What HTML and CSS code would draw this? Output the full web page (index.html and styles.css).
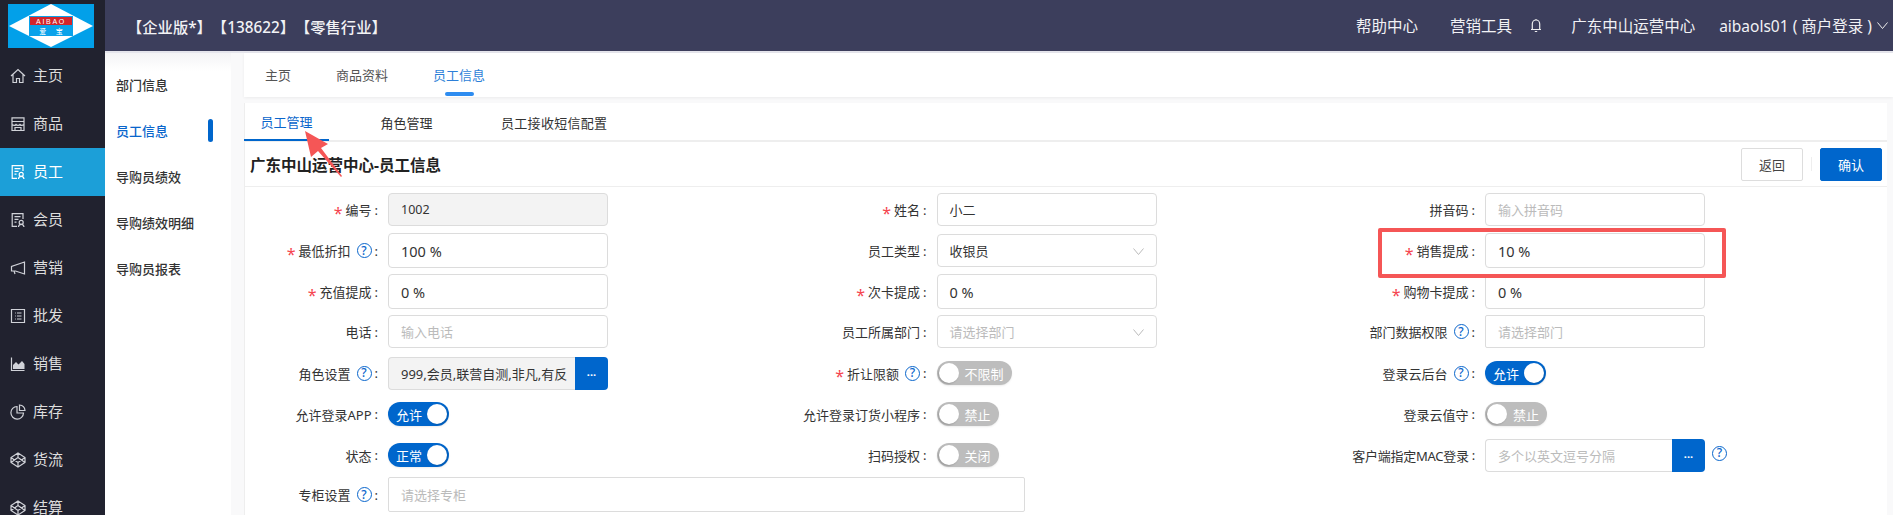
FILE: index.html
```html
<!DOCTYPE html>
<html lang="zh">
<head>
<meta charset="utf-8">
<title>员工信息</title>
<link rel="stylesheet" href="styles.css">
</head>
<body>
<svg class="defs" width="0" height="0">
  <symbol id="i-doc" viewBox="0 0 16 16"><path d="M13 7V1.600H2.200v12.800H7M4.500 4.600h6M4.500 7.400h4M4.500 10.200h2"/><circle cx="11.200" cy="10.400" r="2"/><path d="M8.400 15c.3-1.700 1.300-2.600 2.800-2.600s2.500.9 2.800 2.600"/></symbol>
  <symbol id="i-cube" viewBox="0 0 16 16"><path d="M8 1l7 4.500v5L8 15l-7-4.500v-5zM8 1v4.500M8 15v-4.500M1 5.500l7 5 7-5M1 10.500l7-5 7 5"/></symbol>
</svg>
<div class="app">
  <aside class="sidebar">
    <div class="logo">
      <svg width="86" height="44" viewBox="0 0 86 44">
        <rect width="86" height="44" fill="#02a0e9"/>
        <polygon points="1,22 43,0 85,22 43,43" fill="#fff"/>
        <rect x="21" y="12" width="44" height="20" fill="#0aa2ea"/>
        <rect x="22" y="13" width="42" height="8" fill="#d4252b"/>
        <text class="logo-en" x="43" y="19.500">AIBAO</text>
        <text class="logo-cn" x="43" y="30">爱 宝</text>
      </svg>
    </div>
    <nav class="menu">
      <a class="menu-item"><svg class="mi" viewBox="0 0 16 16"><path d="M1 8l7-6.500L15 8M3 6.500v8h3.500v-4h3v4H13v-8"/></svg>主页</a>
      <a class="menu-item"><svg class="mi" viewBox="0 0 16 16"><path d="M2 1.800h12V14.500H2zM2 5.500h12M2 8.500c1.500 1.200 3 1.200 4 0 1 1.200 3 1.200 4 0 1 1.200 2.500 1.200 4 0M5 14.500v-3h6v3"/></svg>商品</a>
      <a class="menu-item active"><svg class="mi"><use href="#i-doc"/></svg>员工</a>
      <a class="menu-item"><svg class="mi"><use href="#i-doc"/></svg>会员</a>
      <a class="menu-item"><svg class="mi" viewBox="0 0 16 16"><path d="M14.500 2v12L5.500 11H1.500V6.500zM4 11l1 3"/></svg>营销</a>
      <a class="menu-item"><svg class="mi" viewBox="0 0 16 16"><path d="M1.500 1.500h13v13h-13zM7 5h4.500M7 8h4.500M7 11h4.500M5 5h.8M5 8h.8M5 11h.8"/></svg>批发</a>
      <a class="menu-item"><svg class="mi" viewBox="0 0 16 16"><path d="M1.500 1.500v13h13"/><path class="fill" d="M3 13V9l3-3 2.500 2.500L12 5l2.500 3v5z"/></svg>销售</a>
      <a class="menu-item"><svg class="mi" viewBox="0 0 16 16"><path d="M7 2.500a6.300 6.300 0 1 0 6.500 6.500H7zM9.500 1a6 6 0 0 1 5.500 5.500H9.500z"/></svg>库存</a>
      <a class="menu-item"><svg class="mi"><use href="#i-cube"/></svg>货流</a>
      <a class="menu-item"><svg class="mi"><use href="#i-cube"/></svg>结算</a>
    </nav>
  </aside>
  <div class="right">
    <header class="topbar">
      <div class="edition">【企业版*】【138622】【零售行业】</div>
      <div class="top-links">
        <span class="top-help">帮助中心</span>
        <span class="top-tool">营销工具</span>
        <svg class="bell" viewBox="0 0 12 15"><path d="M1 11.500h10M2.300 11.500V6a3.700 4 0 0 1 7.400 0v5.500M4.800 13.500h2.400M6 1v1"/></svg>
        <span class="top-org">广东中山运营中心</span>
        <span class="top-user">aibaols01 ( 商户登录 )</span>
        <svg class="top-chev" viewBox="0 0 11 7"><path d="M.5.500L5.500 6.500 10.500.500"/></svg>
      </div>
    </header>
    <div class="body">
      <nav class="subnav">
        <a class="sub-item">部门信息</a>
        <a class="sub-item on">员工信息</a>
        <a class="sub-item">导购员绩效</a>
        <a class="sub-item">导购绩效明细</a>
        <a class="sub-item">导购员报表</a>
      </nav>
      <main class="main">
        <div class="page-tabs">
          <a class="page-tab">主页</a>
          <a class="page-tab">商品资料</a>
          <a class="page-tab on">员工信息</a>
        </div>
        <section class="panel">
          <div class="panel-tabs">
            <a class="panel-tab on">员工管理</a>
            <a class="panel-tab">角色管理</a>
            <a class="panel-tab">员工接收短信配置</a>
          </div>
          <div class="panel-head">
            <h1 class="panel-title">广东中山运营中心-员工信息</h1>
            <button class="btn">返回</button>
            <span class="btn-sep"></span>
            <button class="btn primary">确认</button>
          </div>
          <div class="form">
            <div class="cell"><label class="lab"><i class="req">*</i>编号<b>:</b></label><div class="field off small">1002</div></div>
            <div class="cell"><label class="lab"><i class="req">*</i>姓名<b>:</b></label><div class="field">小二</div></div>
            <div class="cell"><label class="lab">拼音码<b>:</b></label><div class="field ph">输入拼音码</div></div>

            <div class="cell"><label class="lab"><i class="req">*</i>最低折扣<u class="help">?</u><b>:</b></label><div class="field tall num">100 %</div></div>
            <div class="cell"><label class="lab">员工类型<b>:</b></label><div class="field sel">收银员<svg class="chev" viewBox="0 0 11 7"><path d="M.5.500L5.500 6.500 10.500.500"/></svg></div></div>
            <div class="cell"><label class="lab"><i class="req">*</i>销售提成<b>:</b></label><div class="field tall num">10 %</div></div>

            <div class="cell"><label class="lab"><i class="req">*</i>充值提成<b>:</b></label><div class="field tall num">0 %</div></div>
            <div class="cell"><label class="lab"><i class="req">*</i>次卡提成<b>:</b></label><div class="field tall num">0 %</div></div>
            <div class="cell"><label class="lab"><i class="req">*</i>购物卡提成<b>:</b></label><div class="field tall num">0 %</div></div>

            <div class="cell"><label class="lab">电话<b>:</b></label><div class="field ph">输入电话</div></div>
            <div class="cell"><label class="lab">员工所属部门<b>:</b></label><div class="field ph sel">请选择部门<svg class="chev" viewBox="0 0 11 7"><path d="M.5.500L5.500 6.500 10.500.500"/></svg></div></div>
            <div class="cell"><label class="lab">部门数据权限<u class="help">?</u><b>:</b></label><div class="field ph square">请选择部门</div></div>

            <div class="cell"><label class="lab">角色设置<u class="help">?</u><b>:</b></label><div class="combo"><div class="field off clip">999,会员,联营自测,非凡,有反</div><span class="more">...</span></div></div>
            <div class="cell"><label class="lab"><i class="req">*</i>折让限额<u class="help">?</u><b>:</b></label><span class="sw wide"><em class="knob"></em>不限制</span></div>
            <div class="cell"><label class="lab">登录云后台<u class="help">?</u><b>:</b></label><span class="sw yes">允许<em class="knob"></em></span></div>

            <div class="cell"><label class="lab">允许登录APP<b>:</b></label><span class="sw yes">允许<em class="knob"></em></span></div>
            <div class="cell"><label class="lab">允许登录订货小程序<b>:</b></label><span class="sw"><em class="knob"></em>禁止</span></div>
            <div class="cell"><label class="lab">登录云值守<b>:</b></label><span class="sw"><em class="knob"></em>禁止</span></div>

            <div class="cell"><label class="lab">状态<b>:</b></label><span class="sw yes">正常<em class="knob"></em></span></div>
            <div class="cell"><label class="lab">扫码授权<b>:</b></label><span class="sw"><em class="knob"></em>关闭</span></div>
            <div class="cell"><label class="lab mac">客户端指定MAC登录<b>:</b></label><div class="combo"><div class="field ph clip">多个以英文逗号分隔</div><span class="more">...</span></div><u class="help after">?</u></div>

            <div class="cell span2"><label class="lab">专柜设置<u class="help">?</u><b>:</b></label><div class="field ph long">请选择专柜</div></div>
          </div>
        </section>
      </main>
    </div>
  </div>
  <div class="mark-box"></div>
  <svg class="mark-arrow" width="50" height="60" viewBox="0 0 50 60"><polygon points="5,1 28,14 21,18 42,46 41,47 18,21 11,27"/></svg>
</div>
</body>
</html>
```

FILE: styles.css
```css
* { box-sizing: border-box; }
html, body { margin: 0; height: 100%; overflow: hidden; }
body {
  font-family: "Noto Sans", "Noto Sans CJK SC", sans-serif;
  font-size: 13px;
  color: #333;
  background: #f8f8f9;
}
.defs { position: absolute; }
.app { position: relative; display: flex; height: 515px; width: 1893px; overflow: hidden; }

/* left rail */
.sidebar { width: 105px; flex: none; background: #21222f; color: #ddd; }
.logo { height: 52px; padding: 4px 8px; }
.logo svg { display: block; }
.logo-en { font: 7px "Liberation Sans", sans-serif; letter-spacing: 1.700px; fill: #fff; text-anchor: middle; }
.logo-cn { font: 7px "Noto Sans CJK SC", sans-serif; fill: #fff; word-spacing: 8px; text-anchor: middle; }
.menu-item { display: flex; align-items: center; gap: 7px; height: 48px; padding-left: 10px; padding-bottom: 1px; font-size: 15px; line-height: 1; }
.menu-item.active { background: #1c9fd8; color: #fff; }
.mi { width: 16px; height: 16px; flex: none; fill: none; stroke: #d0d2d8; stroke-width: 1.200; }
.mi .fill { fill: #d0d2d8; stroke: none; }
.active .mi { stroke: #fff; }

/* top bar */
.right { flex: 1; min-width: 0; display: flex; flex-direction: column; }
.topbar { height: 51px; flex: none; display: flex; align-items: center; justify-content: space-between; background: #3c3e5c; color: #f2f2f5; font-size: 15.500px; padding: 0 5px 0 22px; }
.edition { font-size: 15.300px; font-weight: 500; text-spacing-trim: space-all; }
.top-links { display: flex; align-items: center; }
.top-tool { margin-left: 32px; }
.bell { width: 12px; height: 15px; margin: 0 29px 0 18px; fill: none; stroke: #eee; stroke-width: 1.200; }
.top-user { margin-left: 24px; font-size: 15.500px; }
.top-chev { width: 11px; height: 7px; margin-left: 5px; fill: none; stroke: #eee; }

/* body */
.body { flex: 1; min-height: 0; display: flex; background: #f9f9fa; padding-top: 2px; border-top: 2px solid #e5e5ec; margin-top: 0; }
.subnav { width: 126px; flex: none; margin-top: -2px; background: linear-gradient(#f4f4f6, #fff 18px); padding-top: 8px; }
.sub-item { position: relative; display: flex; align-items: center; height: 46px; padding-left: 11px; font-weight: 500; }
.sub-item.on { color: #0a66cc; }
.sub-item.on::after { content: ""; position: absolute; left: 103px; top: 12px; width: 5px; height: 23px; border-radius: 3px; background: #0066cc; }
.main { flex: 1; min-width: 0; margin-left: 13px; margin-top: -2px; }

.page-tabs { display: flex; height: 44px; background: #fff; box-shadow: 0 1px 3px rgba(0,0,0,.06); }
.page-tab { position: relative; display: flex; align-items: center; height: 42px; padding: 0 21px; margin-right: 3px; color: #555; }
.page-tab.on { color: #2d7fd8; }
.page-tab.on::after { content: ""; position: absolute; left: 33px; bottom: -1px; width: 29px; height: 4px; border-radius: 2px; background: #2d8cf0; }

.panel { width: 1643px; margin-top: 6px; background: #fff; border-left: 1px solid #eee; height: 412px; }
.panel-tabs { display: flex; height: 39px; border-bottom: 2px solid #eee; }
.panel-tab { display: flex; align-items: center; justify-content: center; height: 38px; width: 85px; margin-right: 35px; }
.panel-tab:last-child { width: auto; margin-left: 0; padding: 0 0 0 17px; letter-spacing: .3px; }
.panel-tab.on { color: #0a66cc; border-bottom: 2px solid #0066cc; margin-left: -1px; }
.panel-head { display: flex; align-items: center; height: 45px; border-bottom: 1px solid #eee; padding: 0 5px 0 5px; }
.panel-title { flex: 1; margin: 0; font-size: 15.500px; font-weight: 700; color: #222; }
.btn { width: 62px; height: 33px; padding: 0; border: 1px solid #ddd; border-radius: 2px; background: #fff; color: #444; font: inherit; }
.btn.primary { background: #0066cc; border-color: #0066cc; color: #fff; }
.btn-sep { width: 1px; height: 14px; margin: 0 8px; background: #eee; }

/* form */
.form { display: grid; grid-template-columns: repeat(3, 548.500px); grid-template-rows: 41px 41px 41px 39px 44px 38px 44px 35px; padding-top: 2px; margin-left: -1px; }
.cell { display: flex; align-items: center; min-width: 0; }
.span2 { grid-column: span 2; }
.lab { flex: none; width: 144px; padding-right: 10px; display: flex; align-items: center; justify-content: flex-end; white-space: nowrap; color: #333; }
.lab.mac { letter-spacing: -.25px; }
.lab b { font-weight: 400; margin-left: 3px; }
.req { font-style: normal; color: #f5454f; font-size: 16px; line-height: 1; margin-right: 3px; transform: translateY(3px); }
.help { display: inline-flex; align-items: center; justify-content: center; width: 15px; height: 15px; margin-left: 6px; border: 1.400px solid #0a66cc; border-radius: 50%; color: #0a66cc; font-size: 12px; font-weight: 500; line-height: 1; text-decoration: none; }
.help.after { margin-left: 7px; margin-top: -4px; }

.field { position: relative; display: flex; align-items: center; width: 220px; height: 33px; padding: 0 12px; background: #fff; border: 1px solid #dcdcdc; border-radius: 4px; white-space: nowrap; }
.field.tall { height: 35px; }
.num { font-size: 14.500px; }
.off { background: #f3f3f3; }
.small { font-size: 12.500px; }
.ph { color: #bbb; }
.square { border-radius: 2px; }
.long { width: 637px; height: 35px; border-radius: 2px; }
.chev { position: absolute; right: 12px; top: 13px; width: 11px; height: 7px; fill: none; stroke: #bbb; }

.combo { display: flex; width: 220px; height: 33px; }
.combo .field { flex: 1; width: auto; min-width: 0; border-right: 0; border-radius: 4px 0 0 4px; }
.clip { overflow: hidden; padding-right: 0; }
.more { flex: none; width: 33px; display: flex; align-items: center; justify-content: center; padding-bottom: 3px; background: #0066cc; color: #fff; border-radius: 0 4px 4px 0; font-size: 11px; font-weight: 700; }

.sw { display: flex; align-items: center; justify-content: space-between; width: 62px; height: 24px; padding: 0 8px 0 2px; border-radius: 12px; background: #bdbdbd; color: #fff; box-shadow: 0 1px 2px rgba(0,0,0,.08); }
.sw.wide { width: 75px; }
.sw.yes { width: 61px; background: #0066cc; padding: 0 2px 0 8px; }
.knob { width: 20px; height: 20px; border-radius: 50%; background: #fff; box-shadow: -1px 1px 2px rgba(0,0,0,.2); }
.sw.yes .knob { box-shadow: 1px 1px 2px rgba(0,0,0,.15); }

/* annotation overlay */
.mark-box { position: absolute; left: 1378px; top: 228px; width: 348px; height: 50px; border: 4px solid #f55656; border-radius: 2px; pointer-events: none; }
.mark-arrow { position: absolute; left: 300px; top: 130px; fill: #f55656; pointer-events: none; }
```
